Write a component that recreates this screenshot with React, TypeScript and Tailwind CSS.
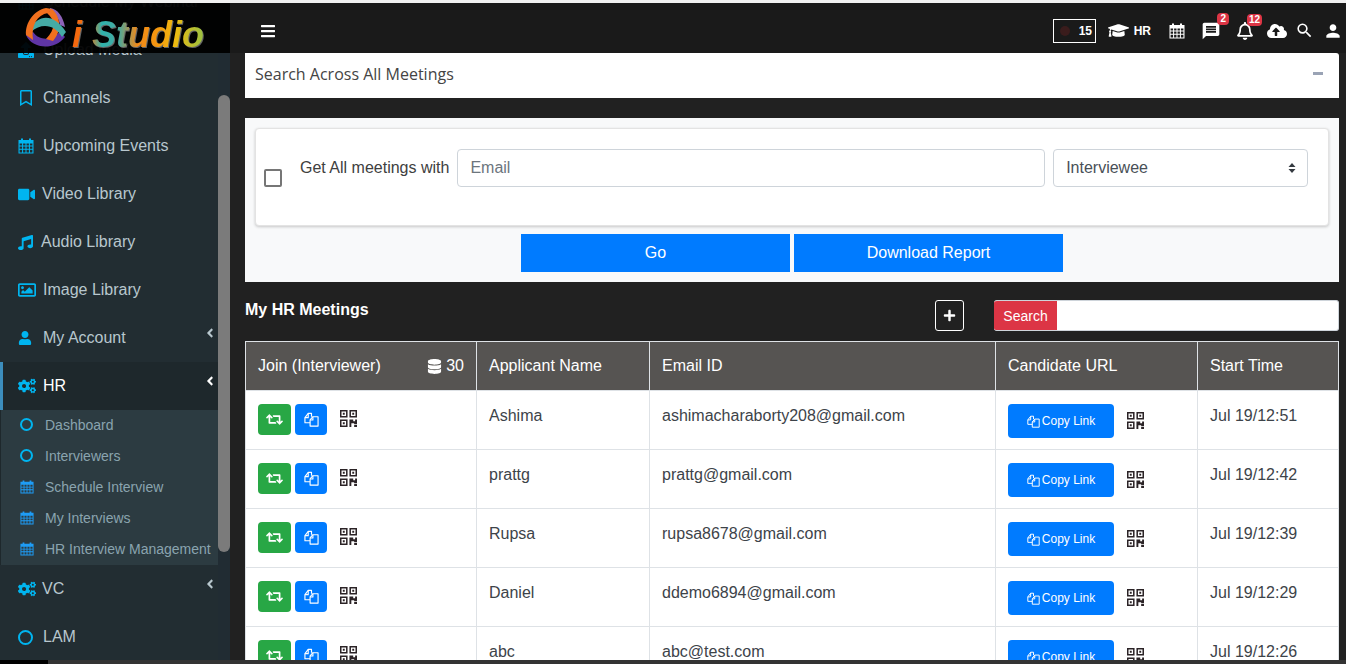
import { FaRegBookmark, FaVideo, FaMusic, FaRegImage, FaUser, FaCogs, FaAngleLeft, FaBars, FaGraduationCap, FaRegBell, FaDatabase, FaRetweet, FaPlus, FaCloudUploadAlt, FaUpload } from "react-icons/fa";
import { MdMessage, MdSearch, MdPerson } from "react-icons/md";

function Qr({ className = "" }: { className?: string }) {
  return (
    <svg viewBox="0 0 18 18" width="17" height="17" className={className} fill="#2b2326">
      <path fillRule="evenodd" d="M0 0h8v8H0zM1.6 1.6v4.8h4.8V1.6zM10 0h8v8h-8zM11.6 1.6v4.8h4.8V1.6zM0 10h8v8H0zM1.6 11.6v4.8h4.8v-4.8z" />
      <path d="M3 3h2v2H3zM13 3h2v2h-2zM3 13h2v2H3zM10 10h4v2h2v-2h2v5h-3v-1h-3v4h-2zM15 16h3v2h-3z" />
    </svg>
  );
}

function Cal({ size = 16, className = "" }: { size?: number; className?: string }) {
  return (
    <svg viewBox="0 0 16 16" width={size} height={size} className={className} fill="currentColor">
      <path fillRule="evenodd" d="M3 0.5h2v1.5h6V0.5h2v1.5h2.5v13.5H0.5V2H3zM1.6 5.5v2.1h2.5V5.5zM5.1 5.5v2.1h2.4V5.5zM8.5 5.5v2.1h2.4V5.5zM11.9 5.5v2.1h2.5V5.5zM1.6 8.6v2.1h2.5V8.6zM5.1 8.6v2.1h2.4V8.6zM8.5 8.6v2.1h2.4V8.6zM11.9 8.6v2.1h2.5V8.6zM1.6 11.7v2.7h2.5v-2.7zM5.1 11.7v2.7h2.4v-2.7zM8.5 11.7v2.7h2.4v-2.7zM11.9 11.7v2.7h2.5v-2.7z" />
    </svg>
  );
}

function Files({ size = 16 }: { size?: number }) {
  return (
    <svg viewBox="0 0 16 16" width={size} height={size} fill="none" stroke="currentColor" strokeWidth="1.2" strokeLinejoin="round">
      <path d="M6.5 11.5H1V6l3.5-4.5H8V5" />
      <path d="M4.5 1.5V6H1" />
      <path d="M6.5 15V8.5L9.5 5H15v10z" />
      <path d="M9.5 5v3.5H6.5" />
    </svg>
  );
}

function Ring({ size, thick = "border-2" }: { size: string; thick?: string }) {
  return <span className={`block rounded-full border-[#00b5f0] ${size} ${thick}`} />;
}

function NavItem({ icon, label, arrow, active, textClass = "" }: { icon: React.ReactNode; label: string; arrow?: boolean; active?: boolean; textClass?: string }) {
  return (
    <div className={`relative flex h-12 items-center text-base ${active ? "border-l-[3px] border-[#3c8dbc] bg-[#1e282c] pl-[15px] text-white" : "pl-[18px] text-[#b8c7ce]"}`}>
      <span className="flex w-[25px] items-center text-[#00b5f0]">{icon}</span>
      <span className={textClass}>{label}</span>
      {arrow && <FaAngleLeft className={`absolute right-[1px] top-[12px] text-[14px] ${active ? "text-white" : "text-[#b8c7ce]"}`} />}
    </div>
  );
}

function SubItem({ icon, label }: { icon: React.ReactNode; label: string }) {
  return (
    <div className="flex h-[31px] items-center whitespace-nowrap pb-[2px] pl-[19px] text-sm text-[#8aa4af]">
      <span className="flex w-[25px] items-center">{icon}</span>
      <span>{label}</span>
    </div>
  );
}

const rows = [
  ["Ashima", "ashimacharaborty208@gmail.com", "Jul 19/12:51"],
  ["prattg", "prattg@gmail.com", "Jul 19/12:42"],
  ["Rupsa", "rupsa8678@gmail.com", "Jul 19/12:39"],
  ["Daniel", "ddemo6894@gmail.com", "Jul 19/12:29"],
  ["abc", "abc@test.com", "Jul 19/12:26"],
];

function Logo() {
  return (
    <div className="absolute left-0 top-0 flex h-[50px] w-[230px] items-center bg-black/95 pl-[24px]">
      <svg width="44" height="44" viewBox="0 0 44 44" className="-mt-[2px] shrink-0">
        <path d="M26 3 C34 4 39 12 41 22 L36 20 C35 13 31 8 26 8 Z" fill="#8d62b8" />
        <path d="M2 30 C8 44 30 46 41 32 L36 26 C30 35 16 37 9 27 Z" fill="#5f35a5" />
        <path d="M23 8 C31 15 32 24 22 34 L29 36 C38 26 37 12 28 4 Z" fill="#f0701e" />
        <path d="M6 24 C14 9 30 8 42 27 L38 32 C31 20 18 17 7 27 Z" fill="#45aba5" />
        <path d="M22 3 C10 5 1 18 2 30 L9 35 C7 20 13 10 24 8 L28 4 Z" fill="#f0701e" />
      </svg>
      <span className="ml-[4px] mt-[14px] whitespace-nowrap bg-[linear-gradient(90deg,#f4650f_0%,#f4750f_12%,#2fb3ad_22%,#45a9a0_34%,#f08a1a_48%,#f5960f_62%,#eebb10_76%,#8cc24a_100%)] bg-clip-text pr-1 text-[36px] font-bold italic leading-none text-transparent [filter:drop-shadow(1px_1px_0_#666)]">
        i Studio
      </span>
    </div>
  );
}

function Sidebar() {
  const cal = <Cal size={14} className="text-[#1e9cf5]" />;
  const circle = <Ring size="h-[13px] w-[13px]" />;
  return (
    <aside className="relative h-full w-[230px] shrink-0 overflow-hidden bg-[#222d32]">
      <div className="-mt-[25px] w-[218px]">
        <NavItem icon={<Cal size={16} />} label="Schedule My Webinar" />
        <NavItem icon={<FaUpload className="text-[16px]" />} label="Upload Media" />
        <NavItem icon={<FaRegBookmark className="text-[16px]" />} label="Channels" />
        <NavItem icon={<Cal size={16} />} label="Upcoming Events" />
        <NavItem icon={<FaVideo className="text-[17px]" />} label="Video Library" textClass="-ml-[1px]" />
        <NavItem icon={<FaMusic className="text-[15px]" />} label="Audio Library" textClass="-ml-[2px]" />
        <NavItem icon={<FaRegImage className="text-[18px]" />} label="Image Library" />
        <NavItem icon={<FaUser className="text-[14px]" />} label="My Account" arrow />
        <NavItem icon={<FaCogs className="text-[18px]" />} label="HR" arrow active />
        <div className="border-l border-[#1e282c] bg-[#2c3b41]">
          <SubItem icon={circle} label="Dashboard" />
          <SubItem icon={circle} label="Interviewers" />
          <SubItem icon={cal} label="Schedule Interview" />
          <SubItem icon={cal} label="My Interviews" />
          <SubItem icon={cal} label="HR Interview Management" />
        </div>
        <NavItem icon={<FaCogs className="text-[18px]" />} label="VC" arrow textClass="-ml-[1px]" />
        <NavItem icon={<Ring size="h-[15px] w-[15px]" thick="border-[2.5px]" />} label="LAM" />
      </div>
      <div className="absolute left-[218px] top-0 h-full w-[12px] bg-[#212c33]" />
      <div className="absolute left-[218px] top-[92px] h-[457px] w-[12px] rounded-[6px] bg-[#7b7b7b]" />
      <Logo />
    </aside>
  );
}

function Header() {
  return (
    <header className="flex h-[50px] shrink-0 items-center justify-between bg-[#1a1a1a] pl-[30px] pr-[3px] pt-[5px] text-white">
      <FaBars className="text-[16px]" />
      <div className="flex items-center">
        <div className="flex h-[24px] w-[43px] items-center gap-[9px] border border-white pl-[6px] text-xs font-bold">
          <span className="h-[10px] w-[10px] rounded-full bg-[#3a1c1c]" />
          <span>15</span>
        </div>
        <FaGraduationCap className="ml-[12px] text-[21px]" />
        <span className="ml-[5px] text-xs font-bold">HR</span>
        <Cal size={16} className="ml-[18px]" />
        <span className="relative ml-[16px] flex">
          <MdMessage className="text-[20px]" />
          <span className="absolute -right-[8px] -top-[8px] rounded-[4px] bg-[#dc3545] px-[3px] text-[10px] font-bold leading-[12px]">2</span>
        </span>
        <span className="relative ml-[15px] flex">
          <FaRegBell className="text-[18px]" />
          <span className="absolute -right-[8px] -top-[8px] rounded-[4px] bg-[#dc3545] px-[2px] text-[10px] font-bold leading-[12px]">12</span>
        </span>
        <FaCloudUploadAlt className="ml-[13px] text-[20px]" />
        <MdSearch className="ml-[8px] text-[19px]" />
        <MdPerson className="ml-[9px] text-[20px]" />
      </div>
    </header>
  );
}

function Filters() {
  return (
    <section className="mt-[20px] flex h-[164px] flex-col bg-[#f8f9fa] px-[10px] pt-[10px]">
      <div className="flex h-[98px] shrink-0 rounded-[4px] border border-[#e3e3e3] bg-white pl-[8px] pr-[20px] pt-[20px] shadow-[0_1px_3px_rgba(0,0,0,0.2)]">
        <span className="mt-[20px] h-[18px] w-[18px] shrink-0 rounded-[2px] border-2 border-[#767676] bg-white" />
        <span className="ml-[18px] mt-[7px] whitespace-nowrap text-base text-[#404040]">Get All meetings with</span>
        <div className="ml-[8px] flex h-[38px] w-[588px] items-center rounded-[4px] border border-[#ced4da] px-[12px] text-base text-[#6c757d]">Email</div>
        <div className="ml-[8px] flex h-[38px] w-[255px] items-center justify-between rounded-[4px] border border-[#ced4da] pl-[12px] pr-[11px] text-base text-[#495057]">
          <span>Interviewee</span>
          <svg width="8" height="12" viewBox="0 0 8 12" fill="#343a40"><path d="M4 1 7.5 5H.5zM4 11 .5 7h7z" /></svg>
        </div>
      </div>
      <div className="mt-[8px] flex justify-center gap-[4px]">
        <button className="h-[38px] w-[269px] bg-[#007bff] text-base text-white">Go</button>
        <button className="h-[38px] w-[269px] bg-[#007bff] text-base text-white">Download Report</button>
      </div>
    </section>
  );
}

function MeetingsTable() {
  return (
    <table className="mt-[10px] w-[1093px] table-fixed border-collapse bg-white text-base">
      <colgroup>
        <col className="w-[231px]" />
        <col className="w-[173px]" />
        <col className="w-[346px]" />
        <col className="w-[202px]" />
        <col className="w-[141px]" />
      </colgroup>
      <thead>
        <tr className="h-[49px] bg-[#565452] text-left text-white">
          <th className="border border-[#dee2e6] px-[12px] font-normal">
            <div className="flex items-center justify-between">
              <span>Join (Interviewer)</span>
              <span className="flex items-center gap-[4px]"><FaDatabase className="text-[15px]" />30</span>
            </div>
          </th>
          <th className="border border-[#dee2e6] px-[12px] font-normal">Applicant Name</th>
          <th className="border border-[#dee2e6] px-[12px] font-normal">Email ID</th>
          <th className="border border-[#dee2e6] px-[12px] font-normal">Candidate URL</th>
          <th className="border border-[#dee2e6] px-[12px] font-normal">Start Time</th>
        </tr>
      </thead>
      <tbody className="text-[#3d4349]">
        {rows.map((r) => (
          <tr key={r[0]} className="h-[59px]">
            <td className="border border-[#dee2e6] px-[12px] pt-[13px] align-top">
              <div className="flex items-center">
                <span className="flex h-[31px] w-[33px] items-center justify-center rounded-[4px] bg-[#28a745] text-white"><FaRetweet className="text-[17px]" /></span>
                <span className="ml-[4px] flex h-[31px] w-[32px] items-center justify-center rounded-[4px] bg-[#007bff] text-white"><Files size={15} /></span>
                <Qr className="ml-[13px] -mt-[3px]" />
              </div>
            </td>
            <td className="border border-[#dee2e6] px-[12px] pt-[13px] align-top">{r[0]}</td>
            <td className="border border-[#dee2e6] px-[12px] pt-[13px] align-top">{r[1]}</td>
            <td className="border border-[#dee2e6] px-[12px] pt-[13px] align-top">
              <div className="flex items-center">
                <span className="flex h-[34px] w-[106px] items-center justify-center gap-[2px] rounded-[4px] bg-[#007bff] text-xs text-white"><Files size={13} />Copy Link</span>
                <Qr className="ml-[13px] -mt-[1px]" />
              </div>
            </td>
            <td className="border border-[#dee2e6] px-[12px] pt-[13px] align-top">{r[2]}</td>
          </tr>
        ))}
      </tbody>
    </table>
  );
}

export default function App() {
  return (
    <div className="flex h-[664px] w-[1346px] flex-col overflow-hidden bg-white font-['Liberation_Sans',Arial,sans-serif]">
      <div className="h-[3px] shrink-0 bg-[#f1f1f1]" />
      <div className="flex h-[657px] shrink-0">
        <Sidebar />
        <main className="flex min-w-0 flex-1 flex-col overflow-hidden bg-[#212121]">
          <Header />
          <div className="pl-[15px] pr-[7px]">
            <div className="flex h-[45px] items-center justify-between rounded-tr-[3px] bg-white pb-[4px] pl-[10px] pr-[16px] font-['Open_Sans',sans-serif] text-base text-[#444]">
              <span>Search Across All Meetings</span>
              <span className="h-[3px] w-[10px] bg-[#9aa3b5]" />
            </div>
            <Filters />
            <div className="mt-[18px] flex h-[31px] items-start">
              <h2 className="-mt-[2px] w-[690px] text-base font-bold text-white">My HR Meetings</h2>
              <span className="flex h-[31px] w-[29px] items-center justify-center rounded-[3px] border border-white text-white"><FaPlus className="text-[13px]" /></span>
              <div className="ml-[30px] flex h-[31px] flex-1 overflow-hidden rounded-[3px] border-y border-r border-[#ced4da] bg-white">
                <span className="flex w-[63px] items-center justify-center bg-[#dc3545] text-sm text-white">Search</span>
              </div>
            </div>
            <MeetingsTable />
          </div>
        </main>
      </div>
      <div className="flex h-[4px] shrink-0">
        <div className="w-[48px] bg-black" />
        <div className="flex-1 bg-[#333]" />
      </div>
    </div>
  );
}
